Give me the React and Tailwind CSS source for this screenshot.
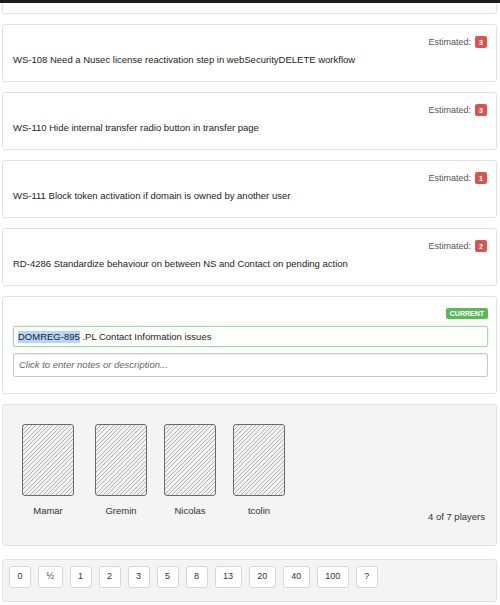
import React from "react";

const tasks = [
  { title: "WS-108 Need a Nusec license reactivation step in webSecurityDELETE workflow", est: "3" },
  { title: "WS-110 Hide internal transfer radio button in transfer page", est: "3" },
  { title: "WS-111 Block token activation if domain is owned by another user", est: "1" },
  { title: "RD-4286 Standardize behaviour on between NS and Contact on pending action", est: "2" },
];

const players = [
  { name: "Mamar", cls: "mr-[21px]" },
  { name: "Gremin", cls: "mr-[17px]" },
  { name: "Nicolas", cls: "mr-[17px]" },
  { name: "tcolin", cls: "" },
];

const values = ["0", "½", "1", "2", "3", "5", "8", "13", "20", "40", "100", "?"];

function TaskCard({ title, est }) {
  return (
    <div className="mt-[10px] h-[58px] rounded-[3px] border border-[#e2e2e2] bg-white pl-[10px] pr-[9px] pt-[11px]">
      <div className="flex h-[12px] items-center justify-end">
        <span className="text-[9px] leading-[12px] text-[#555]">Estimated:</span>
        <span className="ml-[4px] flex h-[12px] w-[12px] items-center justify-center rounded-[2px] bg-[#d9534f] text-[7px] font-bold leading-none text-white">
          {est}
        </span>
      </div>
      <div className="mt-[6px] text-[9.5px] leading-[12px] text-[#222]">{title}</div>
    </div>
  );
}

export default function App() {
  return (
    <div className="min-h-[605px] bg-white font-['Liberation_Sans',Arial,sans-serif]">
      <div className="h-[3px] bg-[#1c1c1c]" />
      <div className="pl-[2px] pr-[3px]">
        <div className="h-[11px] rounded-b-[3px] border-x border-b border-[#e2e2e2] bg-white" />
        {tasks.map((t) => (
          <TaskCard key={t.title} {...t} />
        ))}

        <div className="mt-[10px] h-[98px] rounded-[3px] border border-[#e2e2e2] bg-white pl-[10px] pr-[8px] pt-[11px]">
          <div className="flex h-[11px] justify-end">
            <span className="flex h-[11px] items-center rounded-[2px] bg-[#5cb85c] px-[4px] text-[7px] font-bold leading-none text-white">
              CURRENT
            </span>
          </div>
          <div className="mt-[7px] flex h-[21px] items-center rounded-[2px] border border-[#a8d8a8] bg-white pl-[4px] text-[9.5px] text-[#222] shadow-[0_0_2px_rgba(92,184,92,0.35)]">
            <span className="bg-[#b5d5fb] leading-[12px]">DOMREG-895</span>
            <span className="whitespace-pre leading-[12px]"> .PL Contact Information issues</span>
          </div>
          <div className="mt-[6px] flex h-[24px] items-center rounded-[2px] border border-[#c8c8c8] bg-white pl-[5px] text-[9.5px] italic text-[#666] shadow-[inset_0_1px_1px_rgba(0,0,0,0.08)]">
            Click to enter notes or description...
          </div>
        </div>

        <div className="mt-[10px] flex h-[142px] items-end justify-between rounded-[3px] border border-[#e2e2e2] bg-[#f4f4f4] pb-[22px] pl-[19px] pr-[11px]">
          <div className="mb-[6px] flex items-start">
            {players.map((p) => (
              <div key={p.name} className={`flex w-[52px] flex-col items-center ${p.cls}`}>
                <div className="h-[72px] w-[52px] rounded-[3px] border border-[#6a6a6a] bg-[image:repeating-linear-gradient(-45deg,#b4b4b4_0px,#b4b4b4_0.7px,#f2f2f2_0.7px,#f2f2f2_3px)]" />
                <div className="mt-[9px] whitespace-nowrap text-[9.5px] leading-[12px] text-[#333]">{p.name}</div>
              </div>
            ))}
          </div>
          <div className="text-[9.5px] leading-[12px] text-[#333]">4 of 7 players</div>
        </div>

        <div className="mt-[13px] flex h-[43px] gap-[7px] rounded-[3px] border border-[#e2e2e2] bg-[#f4f4f4] pl-[6px] pt-[6px]">
          {values.map((v) => (
            <div
              key={v}
              className="flex h-[22px] items-center justify-center rounded-[3px] border border-[#d6d6d6] bg-white px-[7.5px] text-[9px] text-[#333]"
            >
              {v}
            </div>
          ))}
        </div>
      </div>
    </div>
  );
}
